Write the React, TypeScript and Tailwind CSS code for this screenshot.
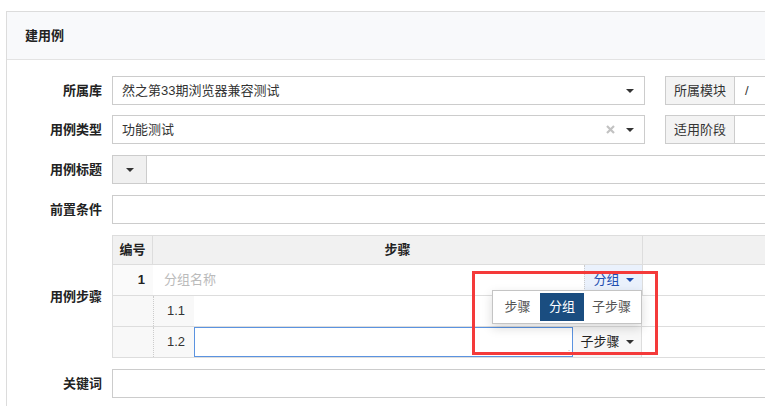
import React from "react";

const font = { fontFamily: '"Liberation Sans", "Noto Sans CJK SC", sans-serif' };

const Caret = ({ color = "#333" }: { color?: string }) => (
  <span
    className="inline-block w-0 h-0 border-l-[4px] border-r-[4px] border-t-[4px] border-l-transparent border-r-transparent"
    style={{ borderTopColor: color }}
  />
);

const Label = ({ children }: { children: React.ReactNode }) => (
  <div className="w-[105px] shrink-0 text-right pr-[10px] font-bold text-[13px] text-[#222]">
    {children}
  </div>
);

const App = () => {
  return (
    <div
      className="relative w-[765px] h-[406px] overflow-hidden bg-white text-[13px] text-[#333]"
      style={font}
    >
      <div className="ml-[6px] mt-[11px] w-[900px] border border-[#dcdcdc]">
        <div className="h-[48px] bg-[#f8f9fb] border-b border-[#e3e3e3] flex items-center pl-[18px] font-bold text-[13px] text-[#222]">
          建用例
        </div>

        <div className="pt-[16px] pb-[10px]">
          {/* 所属库 */}
          <div className="flex items-center h-[29px] mb-[10px]">
            <Label>所属库</Label>
            <div className="w-[533px] h-full border border-[#ccc] flex items-center pl-[9px] pr-[10px]">
              <span className="flex-1">然之第33期浏览器兼容测试</span>
              <Caret />
            </div>
            <div className="ml-[20px] flex h-full">
              <div className="w-[70px] bg-[#f3f3f3] border border-[#ccc] flex items-center justify-center">
                所属模块
              </div>
              <div className="w-[150px] border border-l-0 border-[#ccc] flex items-center pl-[10px]">
                /
              </div>
            </div>
          </div>

          {/* 用例类型 */}
          <div className="flex items-center h-[29px] mb-[11px]">
            <Label>用例类型</Label>
            <div className="w-[533px] h-full border border-[#ccc] flex items-center pl-[9px] pr-[10px]">
              <span className="flex-1">功能测试</span>
              <svg width="9" height="9" viewBox="0 0 9 9" className="mr-[11px]">
                <path d="M1 1 L8 8 M8 1 L1 8" stroke="#c2c2c2" strokeWidth="2.2" />
              </svg>
              <Caret />
            </div>
            <div className="ml-[20px] flex h-full">
              <div className="w-[70px] bg-[#f3f3f3] border border-[#ccc] flex items-center justify-center">
                适用阶段
              </div>
              <div className="w-[150px] border border-l-0 border-[#ccc]" />
            </div>
          </div>

          {/* 用例标题 */}
          <div className="flex items-center h-[29px] mb-[11px]">
            <Label>用例标题</Label>
            <div className="w-[35px] h-full bg-[#f0f0f0] border border-[#ccc] flex items-center justify-center">
              <Caret />
            </div>
            <div className="flex-1 h-full border border-l-0 border-[#ccc]" />
          </div>

          {/* 前置条件 */}
          <div className="flex items-center h-[29px] mb-[11px]">
            <Label>前置条件</Label>
            <div className="flex-1 h-full border border-[#ccc]" />
          </div>

          {/* 用例步骤 */}
          <div className="flex items-center mb-[11px]">
            <Label>用例步骤</Label>
            <div className="flex-1 border border-[#ddd]">
              <div className="flex h-[29px] bg-[#f1f1f1] border-b border-[#ddd] font-bold text-[#222]">
                <div className="w-[40px] border-r border-[#ddd] flex items-center justify-center">编号</div>
                <div className="w-[490px] border-r border-[#ddd] flex items-center justify-center">步骤</div>
                <div className="flex-1" />
              </div>

              <div className="flex h-[31px] border-b border-[#ddd]">
                <div className="w-[40px] bg-[#fafafa] flex items-center justify-end pr-[8px] font-bold text-[#222]">1</div>
                <div className="w-[490px] flex border-r border-[#ddd]">
                  <div className="flex-1 flex items-center pl-[11px] text-[#bbb]">分组名称</div>
                  <div className="w-[58px] bg-[#eaf1fc] border-l border-dotted border-[#ccc] flex items-center justify-center gap-[6px] text-[#1f4fb0]">
                    分组
                    <Caret color="#1f4fb0" />
                  </div>
                </div>
                <div className="flex-1" />
              </div>

              <div className="flex h-[31px] border-b border-[#ddd]">
                <div className="w-[41px] bg-[#f8f8f8] border-r border-dotted border-[#ccc]" />
                <div className="w-[40px] bg-[#f8f8f8] flex items-center justify-end pr-[9px]">1.1</div>
                <div className="w-[448px] border-r border-[#ddd]" />
                <div className="flex-1" />
              </div>

              <div className="flex h-[30px]">
                <div className="w-[41px] bg-[#f8f8f8] border-r border-dotted border-[#ccc]" />
                <div className="w-[40px] bg-[#f8f8f8] flex items-center justify-end pr-[9px]">1.2</div>
                <div className="w-[379px] h-full border border-[#5b93e0] relative">
                  <span className="absolute right-[2px] bottom-[1px] text-[6px] leading-none text-[#999]">⋰</span>
                </div>
                <div className="w-[69px] bg-[#f7f7f7] border-r border-[#ddd] flex items-center justify-center gap-[6px] text-[#222]">
                  子步骤
                  <Caret />
                </div>
                <div className="flex-1" />
              </div>
            </div>
          </div>

          {/* 关键词 */}
          <div className="flex items-center h-[29px]">
            <Label>关键词</Label>
            <div className="flex-1 h-full border border-[#ccc]" />
          </div>
        </div>
      </div>

      {/* dropdown menu */}
      <div className="absolute left-[492px] top-[290px] w-[150px] h-[34px] bg-white border border-[#c4c4c4] shadow-[0_4px_10px_rgba(0,0,0,0.15)] flex items-stretch py-[2px] px-[2px]">
        <div className="w-[45px] flex items-center justify-center text-[#555]">步骤</div>
        <div className="w-[44px] bg-[#1a4d80] text-white flex items-center justify-center">分组</div>
        <div className="flex-1 flex items-center justify-center text-[#555]">子步骤</div>
      </div>

      {/* highlight box */}
      <div className="absolute left-[472px] top-[271px] w-[186px] h-[84px] border-[3px] border-[#f43a3a]" />
    </div>
  );
};

export default App;
